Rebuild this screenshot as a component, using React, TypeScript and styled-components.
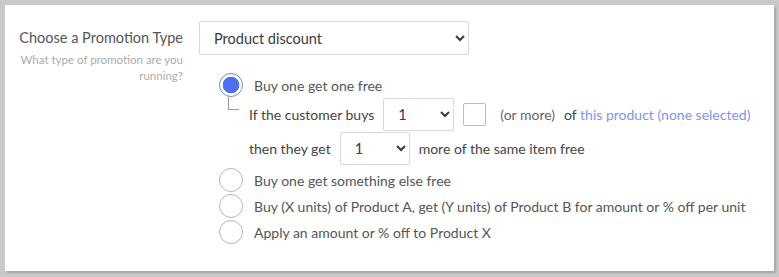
import styled, { createGlobalStyle } from "styled-components";

const GlobalStyle = createGlobalStyle`
  html, body {
    margin: 0;
    padding: 0;
    background: #c9c9c9;
  }
  body {
    font-family: Lato, "Open Sans", sans-serif;
  }
`;

const options = [
  "Buy one get one free",
  "Buy one get something else free",
  "Buy (X units) of Product A, get (Y units) of Product B for amount or % off per unit",
  "Apply an amount or % off to Product X",
];

export default function App() {
  return (
    <>
      <GlobalStyle />
      <Page>
        <Card>
          <FormRow>
            <LabelCol>
              <Label>Choose a Promotion Type</Label>
              <Hint>What type of promotion are you running?</Hint>
            </LabelCol>
            <FieldCol>
              <Select width={270} defaultValue="product">
                <option value="product">Product discount</option>
                <option value="order">Order discount</option>
              </Select>
              <RadioGroup>
                <RadioOption>
                  <Radio checked />
                  <OptionText>{options[0]}</OptionText>
                </RadioOption>
                <SubBlock>
                  <SubRow>
                    <span>If the customer buys</span>
                    <Select width={71} defaultValue="1">
                      <option value="1">1</option>
                      <option value="2">2</option>
                    </Select>
                    <Check />
                    <Muted>(or more)</Muted>
                    <span>
                      of <Link>this product (none selected)</Link>
                    </span>
                  </SubRow>
                  <SubRow>
                    <span>then they get</span>
                    <Select width={70} defaultValue="1">
                      <option value="1">1</option>
                      <option value="2">2</option>
                    </Select>
                    <span>more of the same item free</span>
                  </SubRow>
                </SubBlock>
                {options.slice(1).map((o) => (
                  <RadioOption key={o}>
                    <Radio />
                    <OptionText>{o}</OptionText>
                  </RadioOption>
                ))}
              </RadioGroup>
            </FieldCol>
          </FormRow>
        </Card>
      </Page>
    </>
  );
}

// Style
const Page = styled.div`
  width: 779px;
  height: 277px;
  padding: 5px 5px 0 5px;
  box-sizing: border-box;
`;

const Card = styled.div`
  width: 769px;
  height: 266px;
  background: #ffffff;
  box-shadow: 2px 2px 2px rgba(0, 0, 0, 0.18);
  padding: 16px 0 0 0;
  box-sizing: border-box;
`;

const FormRow = styled.div`
  display: flex;
  gap: 16px;
`;

const LabelCol = styled.div`
  width: 178px;
  text-align: right;
  padding-top: 8px;
`;

const Label = styled.div`
  font-size: 14.5px;
  color: #555555;
  line-height: 18px;
`;

const Hint = styled.div`
  font-size: 11.5px;
  color: #acacac;
  line-height: 16px;
  margin-top: 5px;
`;

const FieldCol = styled.div`
  display: flex;
  flex-direction: column;
`;

const Select = styled.select<{ width: number }>`
  width: ${(p) => p.width}px;
  height: 34px;
  border: 1px solid #d9d9d9;
  border-radius: 2px;
  background: #ffffff;
  padding: 0 8px 0 10px;
  font-family: Lato, "Open Sans", sans-serif;
  font-size: 14.5px;
  color: #3a3a3a;
  box-sizing: border-box;
  outline: none;
`;

const RadioGroup = styled.div`
  display: flex;
  flex-direction: column;
  margin-top: 17px;
  margin-left: 20px;
`;

const RadioOption = styled.div`
  display: flex;
  align-items: center;
  gap: 11px;
  height: 26px;
`;

const Radio = styled.span<{ checked?: boolean }>`
  width: 24px;
  height: 24px;
  border-radius: 50%;
  box-sizing: border-box;
  flex: none;
  border: ${(p) => (p.checked ? "1.5px solid #6d86f7" : "1px solid #b5b5b5")};
  background: ${(p) =>
    p.checked
      ? "radial-gradient(circle, #4e6ef6 0 8px, #ffffff 8.6px)"
      : "#ffffff"};
`;

const OptionText = styled.span`
  font-size: 14px;
  color: #555555;
`;

const SubBlock = styled.div`
  position: relative;
  display: flex;
  flex-direction: column;
  padding-left: 30px;
  margin-top: -1px;
  margin-bottom: 2px;

  &::before {
    content: "";
    position: absolute;
    left: 9px;
    top: 0;
    width: 10px;
    height: 12px;
    border-left: 1px solid #9a9a9a;
    border-bottom: 1px solid #9a9a9a;
  }

  select {
    height: 33px;
  }
`;

const SubRow = styled.div`
  display: flex;
  align-items: center;
  gap: 9px;
  height: 34px;
  font-size: 14px;
  color: #444444;
`;

const Check = styled.span`
  width: 23px;
  height: 23px;
  border: 1px solid #bdbdbd;
  border-radius: 2px;
  box-sizing: border-box;
  margin-right: 5px;
`;

const Muted = styled.span`
  color: #666666;
`;

const Link = styled.a`
  color: #7f93f5;
  cursor: pointer;
`;
